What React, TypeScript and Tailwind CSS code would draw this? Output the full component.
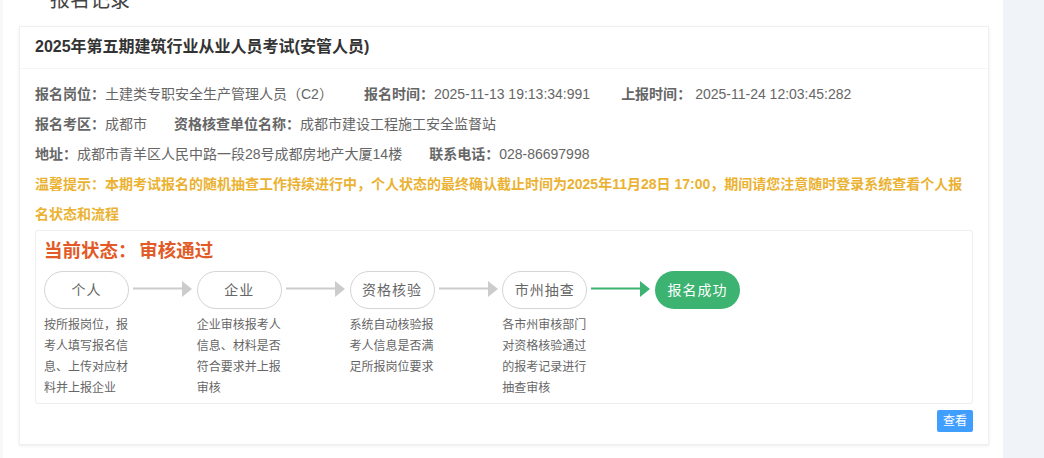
const font = "font-['Liberation_Sans','Noto_Sans_CJK_SC',sans-serif]";

// full-width punctuation, kept as escapes
const COLON = "\uFF1A";
const COMMA = "\uFF0C";

const steps = [
  { name: "个人", lines: [`按所报岗位${COMMA}报`, "考人填写报名信", "息、上传对应材", "料并上报企业"] },
  { name: "企业", lines: ["企业审核报考人", "信息、材料是否", "符合要求并上报", "审核"] },
  { name: "资格核验", lines: ["系统自动核验报", "考人信息是否满", "足所报岗位要求"] },
  { name: "市州抽查", lines: ["各市州审核部门", "对资格核验通过", "的报考记录进行", "抽查审核"] },
];

function Field({ label, value, className }: { label: string; value: string; className?: string }) {
  return (
    <span className={className}>
      <b className="font-bold">{label}{COLON}</b>
      {value}
    </span>
  );
}

function Arrow({ green }: { green?: boolean }) {
  const color = green ? "#3cb371" : "#cccccc";
  return (
    <svg width="60" height="18" viewBox="0 0 60 18" className="ml-[4px] mr-[3.75px] mt-[9px] shrink-0">
      <rect x="0" y="7.5" width="50" height="2" fill={color} />
      <path d="M49 1 L59 9 L49 17 Z" fill={color} />
    </svg>
  );
}

export default function App() {
  return (
    <div className={`${font} flex h-[458px] w-[1044px] overflow-hidden bg-white text-[14px] text-[#666]`}>
      <div className="w-[3px] shrink-0 bg-[#f6f8fa]" />
      <main className="w-[1000px] shrink-0">
        <h2 className="mt-[-13px] h-[39px] pl-[47px] text-[20px] leading-[26px] text-[#444]">报名记录</h2>
        <section className="ml-[16px] h-[419px] w-[970px] border border-[#f0f0f0] shadow-[0_1px_3px_rgba(0,0,0,0.08)]">
          <header className="h-[42px] border-b border-[#f5f5f5] pl-[15px] text-[16px] font-bold leading-[40px] text-[#333]">
            2025年第五期建筑行业从业人员考试(安管人员)
          </header>
          <div className="px-[15px] pt-[10px] leading-[30px]">
            <div className="flex">
              <Field label="报名岗位" value={"土建类专职安全生产管理人员\uFF08C2\uFF09"} />
              <Field className="ml-[31px]" label="报名时间" value="2025-11-13 19:13:34:991" />
              <Field className="ml-[31px] [&>b]:mr-[4px]" label="上报时间" value="2025-11-24 12:03:45:282" />
            </div>
            <div className="flex">
              <Field label="报名考区" value="成都市" />
              <Field className="ml-[27px]" label="资格核查单位名称" value="成都市建设工程施工安全监督站" />
            </div>
            <div className="flex">
              <Field label="地址" value="成都市青羊区人民中路一段28号成都房地产大厦14楼" />
              <Field className="ml-[27px]" label="联系电话" value="028-86697998" />
            </div>
            <p className="font-bold text-[#ebb232]">
              {`温馨提示${COLON}本期考试报名的随机抽查工作持续进行中${COMMA}个人状态的最终确认截止时间为2025年11月28日 17:00${COMMA}期间请您注意随时登录系统查看个人报名状态和流程`}
            </p>
            <div className="mt-[1px] h-[174px] w-[938px] rounded-[3px] border border-[#eeeeee] px-[8px]">
              <h3 className="mt-[7px] text-[18.5px] font-bold leading-[26px] text-[#e25a26] [word-spacing:-2.5px]">{`当前状态${COLON} 审核通过`}</h3>
              <div className="mt-[7px] flex items-start">
                {steps.map((step, i) => (
                  <div key={step.name} className="flex items-start">
                    <div className="w-[85px]">
                      <div className="flex h-[38px] items-center justify-center rounded-[19px] border border-[#d4d4d4] text-[14px] tracking-[1px] text-[#666]">
                        {step.name}
                      </div>
                      <div className="mt-[6px] text-[12px] leading-[21px] text-[#666]">
                        {step.lines.map((line) => (
                          <div key={line} className="whitespace-nowrap">{line}</div>
                        ))}
                      </div>
                    </div>
                    <Arrow green={i === steps.length - 1} />
                  </div>
                ))}
                <div className="flex h-[38px] w-[85px] items-center justify-center rounded-[19px] bg-[#3cb371] text-[14px] tracking-[1px] text-white">
                  报名成功
                </div>
              </div>
            </div>
            <div className="mt-[6px] flex justify-end">
              <button type="button" className="h-[22px] w-[36px] rounded-[2px] bg-[#409eff] text-[12px] leading-[22px] text-white">
                查看
              </button>
            </div>
          </div>
        </section>
      </main>
      <aside className="flex-1 bg-[#f0f4f8]" />
    </div>
  );
}
